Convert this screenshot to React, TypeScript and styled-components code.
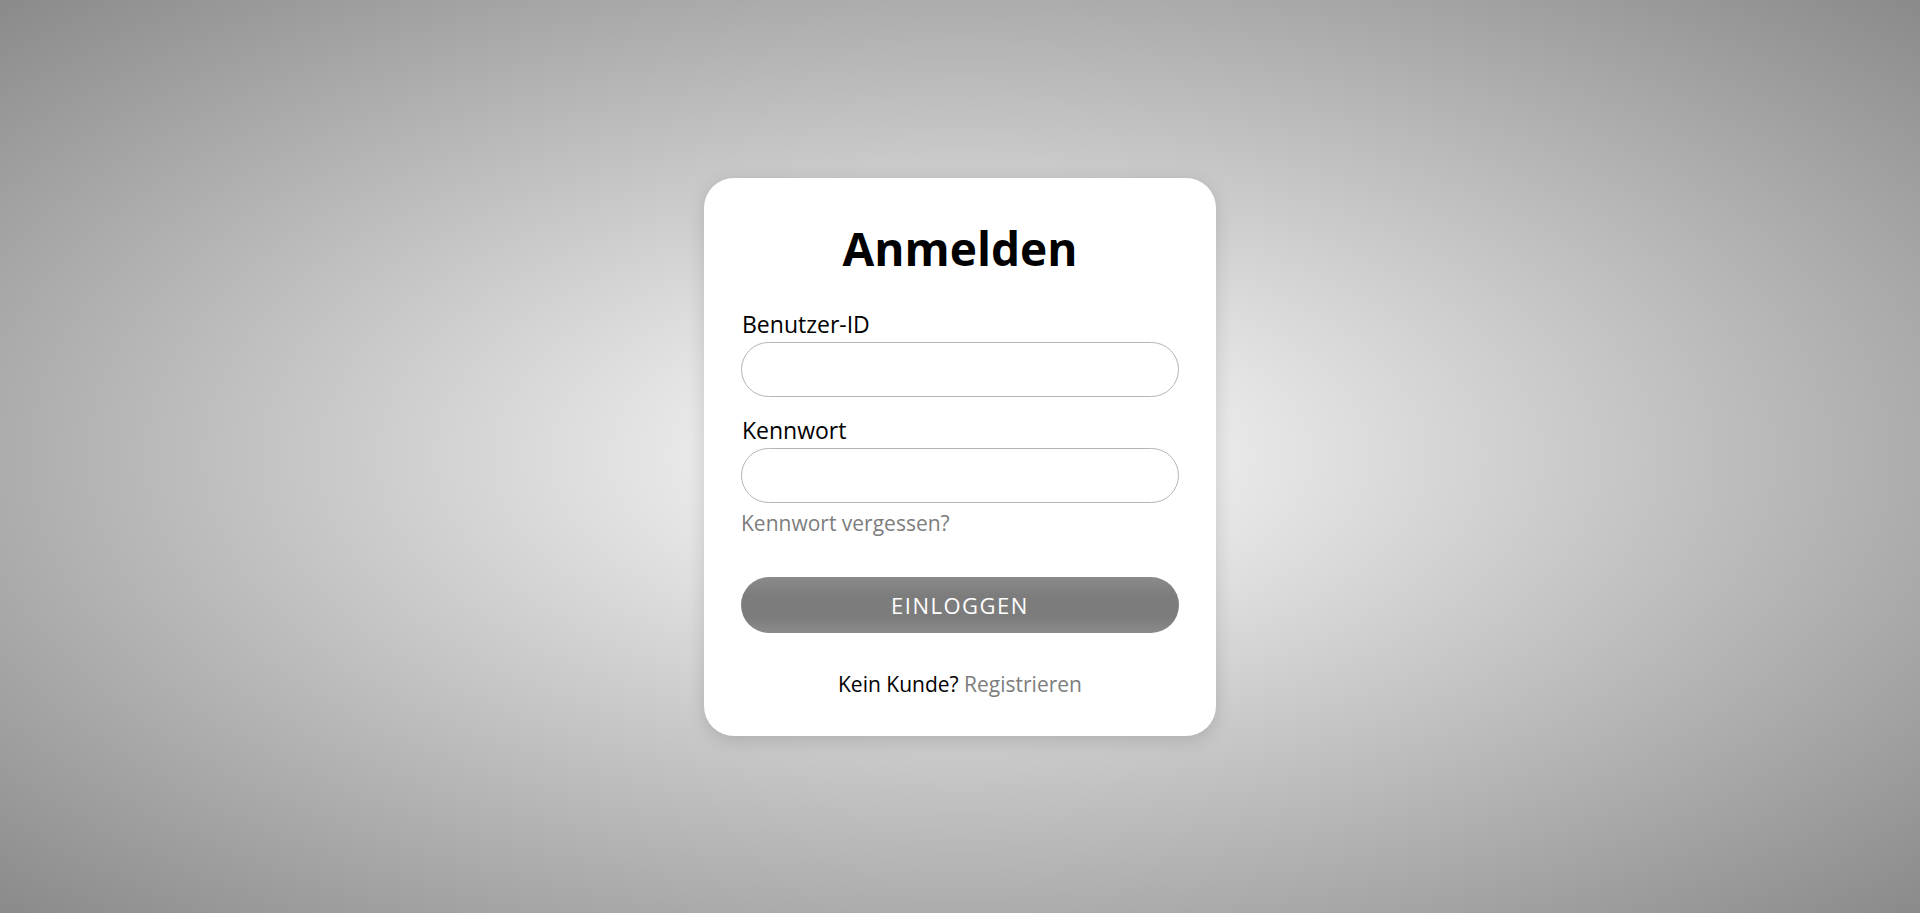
import React from "react";
import styled, {createGlobalStyle} from "styled-components";

const GlobalStyle = createGlobalStyle`
  * {
    box-sizing: border-box;
  }
  html, body {
    margin: 0;
    padding: 0;
  }
  body {
    font-family: "Open Sans", "Liberation Sans", sans-serif;
    color: #000;
  }
`

const LoginForm = () => {
    return (
        <Page>
            <Card>
                <Title>Anmelden</Title>
                <Field>
                    <Label htmlFor="user">Benutzer-ID</Label>
                    <Input id="user" type="text"/>
                </Field>
                <Field>
                    <Label htmlFor="pass">Kennwort</Label>
                    <Input id="pass" type="password"/>
                </Field>
                <Forgot href="#">Kennwort vergessen?</Forgot>
                <LoginButton type="button">Einloggen</LoginButton>
                <Footer>
                    Kein Kunde? <FooterLink href="#">Registrieren</FooterLink>
                </Footer>
            </Card>
        </Page>
    )
}

export default function App() {
    return (
        <>
            <GlobalStyle/>
            <LoginForm/>
        </>
    )
}

// Styled Components
const Page = styled.div`
  min-height: 100vh;
  display: flex;
  align-items: center;
  justify-content: center;
  background: radial-gradient(ellipse at center, #ffffff 0%, #8a8a8a 100%);
`
const Card = styled.div`
  width: 512px;
  display: flex;
  flex-direction: column;
  padding: 42px 37px 38px 37px;
  background: #fff;
  border-radius: 30px;
  box-shadow: 0 4px 18px rgba(0, 0, 0, 0.14);
`
const Title = styled.h1`
  margin: 0 0 34px 0;
  font-size: 46px;
  line-height: 56px;
  font-weight: 700;
  text-align: center;
  color: #000;
`
const Field = styled.div`
  display: flex;
  flex-direction: column;
  gap: 4px;
  & + & {
    margin-top: 19px;
  }
`
const Label = styled.label`
  font-size: 23px;
  line-height: 28px;
  font-weight: 400;
  color: #000;
  padding-left: 1px;
`
const Input = styled.input`
  width: 100%;
  height: 55px;
  padding: 0 22px;
  border: 1px solid #b5b5b5;
  border-radius: 28px;
  background: #fff;
  font-family: inherit;
  font-size: 20px;
  outline: none;
`
const Forgot = styled.a`
  margin-top: 7px;
  font-size: 21px;
  line-height: 26px;
  color: #7d7d7d;
  text-decoration: none;
  align-self: flex-start;
`
const LoginButton = styled.button`
  margin-top: 41px;
  height: 56px;
  border: none;
  border-radius: 28px;
  background: linear-gradient(180deg, #8a8a8a 0%, #7c7c7c 35%, #7c7c7c 70%, #8a8a8a 100%);
  color: #fff;
  font-family: inherit;
  font-size: 22px;
  font-weight: 500;
  letter-spacing: 1.5px;
  text-transform: uppercase;
  cursor: pointer;
`
const Footer = styled.div`
  margin-top: 37px;
  font-size: 21px;
  line-height: 28px;
  text-align: center;
  color: #000;
`
const FooterLink = styled.a`
  color: #7d7d7d;
  text-decoration: none;
`
